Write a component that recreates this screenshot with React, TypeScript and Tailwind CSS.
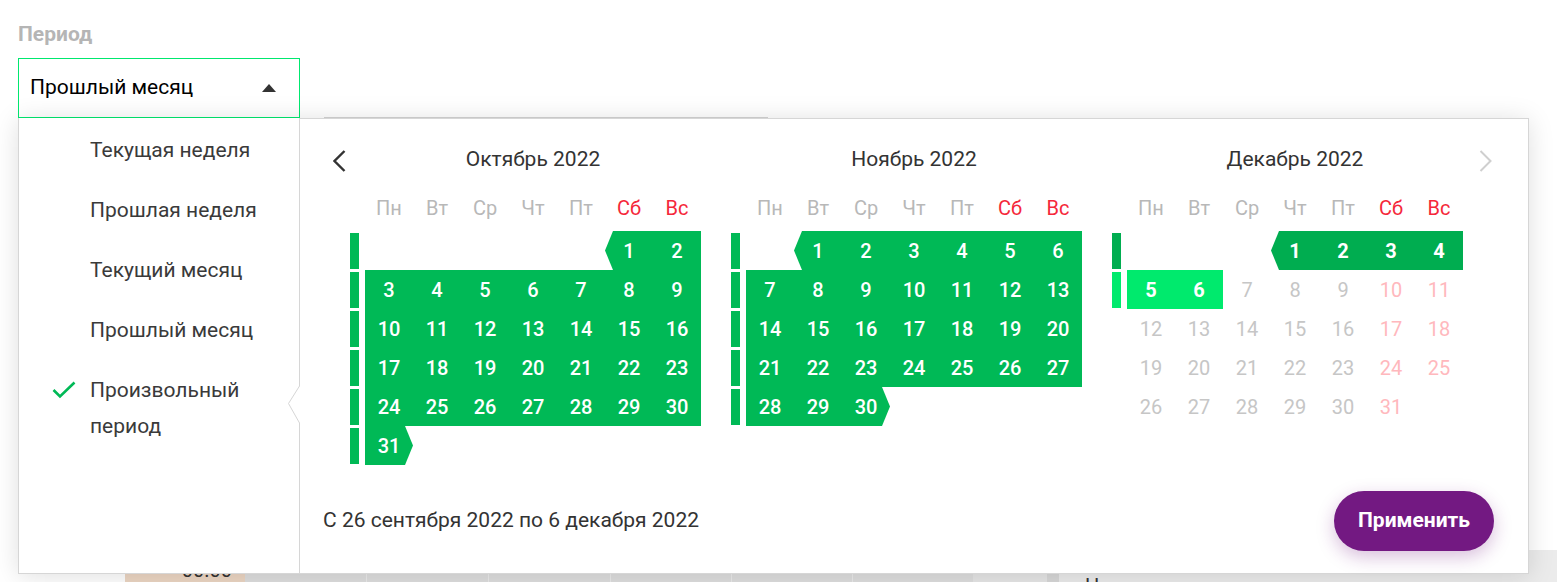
import React from 'react';
import clsx from 'clsx';

type Tone = 'sel' | 'dark' | 'bright' | 'off';
type Shape = 'start' | 'end' | null;

interface MonthDef {
  title: string;
  offset: number;
  days: number;
  bars: Array<'green' | 'dark' | 'bright' | null>;
  tone: (d: number) => Tone;
  shape: (d: number) => Shape;
}

const WEEKDAYS = ['Пн', 'Вт', 'Ср', 'Чт', 'Пт', 'Сб', 'Вс'];

const MONTHS: MonthDef[] = [
  {
    title: 'Октябрь 2022',
    offset: 5,
    days: 31,
    bars: ['green', 'green', 'green', 'green', 'green', 'green'],
    tone: () => 'sel',
    shape: (d) => (d === 1 ? 'start' : d === 31 ? 'end' : null),
  },
  {
    title: 'Ноябрь 2022',
    offset: 1,
    days: 30,
    bars: ['green', 'green', 'green', 'green', 'green'],
    tone: () => 'sel',
    shape: (d) => (d === 1 ? 'start' : d === 30 ? 'end' : null),
  },
  {
    title: 'Декабрь 2022',
    offset: 3,
    days: 31,
    bars: ['dark', 'bright', null, null, null],
    tone: (d) => (d <= 4 ? 'dark' : d <= 6 ? 'bright' : 'off'),
    shape: (d) => (d === 1 ? 'start' : null),
  },
];

const PERIODS = ['Текущая неделя', 'Прошлая неделя', 'Текущий месяц', 'Прошлый месяц', 'Произвольный период'];

function weeks(m: MonthDef) {
  const slots: Array<number | null> = [];
  for (let i = 0; i < m.offset; i++) slots.push(null);
  for (let d = 1; d <= m.days; d++) slots.push(d);
  while (slots.length % 7 !== 0) slots.push(null);
  const rows: Array<Array<number | null>> = [];
  for (let i = 0; i < slots.length; i += 7) rows.push(slots.slice(i, i + 7));
  return rows;
}

const Month: React.FC<{ month: MonthDef }> = ({ month }) => (
  <div className="flex w-[351px] flex-col">
    <div className="flex h-[36px] items-center justify-center pl-[15px] text-[21px] text-[#333]">{month.title}</div>
    <div className="mt-[12px] flex h-[36px] items-center pl-[15px]">
      {WEEKDAYS.map((w, i) => (
        <div
          key={w}
          className={clsx('w-[48px] text-center text-[20px]', i >= 5 ? 'text-[#f5283a]' : 'text-[#b8b8b8]')}
        >
          {w}
        </div>
      ))}
    </div>
    <div className="mt-[5px] flex flex-col">
      {weeks(month).map((row, ri) => {
        const bar = month.bars[ri];
        return (
          <div key={ri} className="flex h-[39px] items-center">
            <div
              className={clsx(
                'mr-[6px] h-[36px] w-[9px]',
                bar === 'green' && 'bg-[#00b956]',
                bar === 'dark' && 'bg-[#00ad50]',
                bar === 'bright' && 'bg-[#00ea6d]'
              )}
            />
            {row.map((d, ci) => {
              if (d === null) return <div key={ci} className="h-[39px] w-[48px]" />;
              const tone = month.tone(d);
              const shape = month.shape(d);
              const weekend = ci >= 5;
              return (
                <div
                  key={ci}
                  className={clsx(
                    'flex h-[39px] w-[48px] items-center justify-center text-[20px]',
                    tone === 'sel' && 'bg-[#00b956] font-medium text-white',
                    tone === 'dark' && 'bg-[#00ad50] font-bold text-white',
                    tone === 'bright' && 'bg-[#00ea6d] font-bold text-white',
                    tone === 'off' && (weekend ? 'text-[#ffb8bd]' : 'text-[#c6c6c6]'),
                    shape === 'start' && '[clip-path:polygon(8px_0,100%_0,100%_100%,8px_100%,0_50%)]',
                    shape === 'end' && '[clip-path:polygon(0_0,40px_0,100%_50%,40px_100%,0_100%)]'
                  )}
                >
                  {d}
                </div>
              );
            })}
          </div>
        );
      })}
    </div>
  </div>
);

const Popup: React.FC = () => (
  <div className="absolute left-0 top-[60px] z-10 flex h-[456px] w-[1511px] border-x border-b border-[#d6d6d6] bg-white shadow-[0_2px_24px_rgba(0,0,0,0.13)]">
    <div className="w-[280px] pt-[2px]">
      {PERIODS.map((p) => (
        <div key={p} className="flex items-start py-[12px] pl-[33px]">
          <div className="mr-[14px] flex h-[36px] w-[24px] items-center justify-center">
            {p === 'Произвольный период' && (
              <svg width="24" height="18" viewBox="0 0 24 18" fill="none">
                <polyline points="1.5,9 8,15.5 22.5,1.5" stroke="#00b956" strokeWidth="2.6" />
              </svg>
            )}
          </div>
          <div className="w-[176px] text-[21px] leading-[36px] text-[#3a3a3a]">{p}</div>
        </div>
      ))}
    </div>

    <div className="relative flex flex-1 flex-col border-l border-t border-[#d6d6d6]">
      <svg className="absolute left-[33px] top-[31px]" width="13" height="22" viewBox="0 0 13 22" fill="none">
        <polyline points="11.5,1 1.5,11 11.5,21" stroke="#333" strokeWidth="2.4" />
      </svg>
      <svg className="absolute right-[36px] top-[31px]" width="13" height="22" viewBox="0 0 13 22" fill="none">
        <polyline points="1.5,1 11.5,11 1.5,21" stroke="#cfcfcf" strokeWidth="2" />
      </svg>
      <svg className="absolute left-[-13px] top-[267px]" width="15" height="37" viewBox="0 0 15 37" fill="none">
        <polygon points="12.5,0 1.5,17.5 12.5,37 15,37 15,0" fill="#fff" />
        <polyline points="12.5,0 1.5,17.5 12.5,37" stroke="#d6d6d6" strokeWidth="1" />
      </svg>

      <div className="flex gap-[30px] pl-[50px] pt-[23px]">
        {MONTHS.map((m) => (
          <Month key={m.title} month={m} />
        ))}
      </div>

      <div className="mt-auto flex items-center justify-between pb-[22px] pl-[23px] pr-[34px]">
        <span className="text-[21px] text-[#333]">С 26 сентября 2022 по 6 декабря 2022</span>
        <button className="h-[60px] w-[160px] rounded-full bg-[#731982] text-[21px] font-bold text-white shadow-[0_6px_18px_rgba(115,25,130,0.28)]">
          Применить
        </button>
      </div>
    </div>
  </div>
);

export default function App() {
  return (
    <div className="relative h-[582px] w-[1557px] overflow-hidden bg-white font-['Roboto',sans-serif]">
      <div className="pl-[18px] pt-[24px]">
        <div className="text-[21px] font-bold leading-[20px] text-[#b5b5b5]">Период</div>
        <div className="mt-[14px] flex items-end">
          <div className="relative w-[282px]">
            <div className="flex h-[60px] items-center justify-between border border-[#00e86f] pl-[11px] pr-[23px]">
              <span className="text-[21px] text-black">Прошлый месяц</span>
              <svg width="14" height="8" viewBox="0 0 14 8">
                <polygon points="0,8 7,0 14,8" fill="#333" />
              </svg>
            </div>
            <Popup />
          </div>
          <div className="mb-[-1px] ml-[24px] h-[2px] w-[444px] bg-[#d4d4d4]" />
        </div>
      </div>

      <div className="mt-[432px] flex h-[40px] text-[20px] text-[#333]">
        <div className="w-[125px]" />
        <div className="flex w-[120px] items-center justify-end bg-[#ecd6c3] pr-[13px]">00.00</div>
        <div className="w-[122px] border-r border-[#ebebeb] bg-[#dedede]" />
        <div className="w-[122px] border-r border-[#ebebeb] bg-[#dedede]" />
        <div className="w-[122px] border-r border-[#ebebeb] bg-[#dedede]" />
        <div className="w-[121px] border-r border-[#ebebeb] bg-[#dedede]" />
        <div className="w-[121px] border-r border-[#ebebeb] bg-[#dedede]" />
        <div className="w-[120px] bg-[#dedede]" />
        <div className="w-[74px] bg-[#e6e6e6]" />
        <div className="w-[12px] bg-[#d8d8d8]" />
        <div className="flex-1 bg-[#ebebeb] pl-[26px] pt-[26px] leading-[20px]">Н</div>
      </div>
    </div>
  );
}
